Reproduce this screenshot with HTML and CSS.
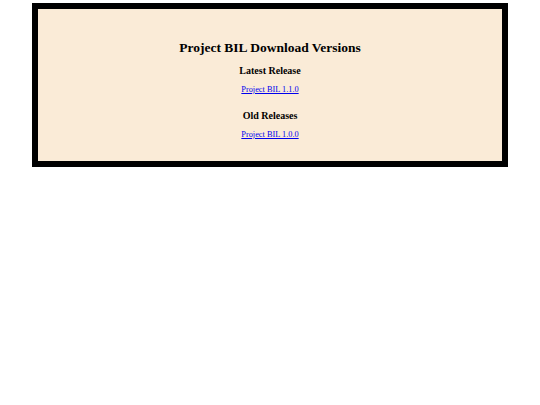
FILE: index.html
```html
<!DOCTYPE html>
<html lang="en">
<head>
    <meta charset="UTF-8">
    <meta name="viewport" content="width=device-width, initial-scale=1.0">
    <title>Project BIL Downloads</title>
    <link rel="stylesheet" href="styles.css">
</head>
<body>
    <div class="downloads">
        <h1>Project BIL Download Versions</h1>
        <h3>Latest Release</h3>
        <a href="#">Project BIL 1.1.0</a>
        <h3 class="old">Old Releases</h3>
        <a href="#">Project BIL 1.0.0</a>
    </div>
</body>
</html>
```
FILE: styles.css
```css
body {
    margin: 0;
    padding-top: 3px;
    font-family: "Liberation Serif", "Times New Roman", serif;
    background-color: white;
}

.downloads {
    width: 476px;
    margin: 0 auto;
    box-sizing: border-box;
    border: 6px solid black;
    background-color: antiquewhite;
    text-align: center;
    padding: 31px 0 21px;
}

h1 {
    font-size: 13.5px;
    line-height: 16px;
    margin: 0 0 9px;
}

h3 {
    font-size: 10px;
    line-height: 12px;
    margin: 0 0 8px;
}

h3.old {
    margin-top: 15px;
}

a {
    display: block;
    font-size: 8.3px;
    line-height: 10px;
    color: #0000ee;
}
```
